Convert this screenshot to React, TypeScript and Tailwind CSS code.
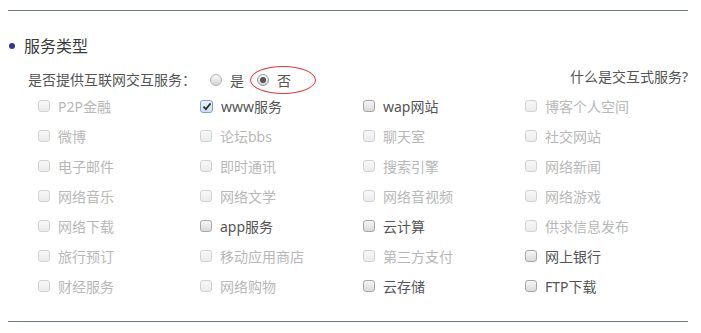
import React from "react";

type Item = { label: string; enabled?: boolean; checked?: boolean };

const items: Item[] = [
  { label: "P2P金融" },
  { label: "www服务", enabled: true, checked: true },
  { label: "wap网站", enabled: true },
  { label: "博客个人空间" },
  { label: "微博" },
  { label: "论坛bbs" },
  { label: "聊天室" },
  { label: "社交网站" },
  { label: "电子邮件" },
  { label: "即时通讯" },
  { label: "搜索引擎" },
  { label: "网络新闻" },
  { label: "网络音乐" },
  { label: "网络文学" },
  { label: "网络音视频" },
  { label: "网络游戏" },
  { label: "网络下载" },
  { label: "app服务", enabled: true },
  { label: "云计算", enabled: true },
  { label: "供求信息发布" },
  { label: "旅行预订" },
  { label: "移动应用商店" },
  { label: "第三方支付" },
  { label: "网上银行", enabled: true },
  { label: "财经服务" },
  { label: "网络购物" },
  { label: "云存储", enabled: true },
  { label: "FTP下载", enabled: true },
];

function Box({ enabled, checked }: { enabled?: boolean; checked?: boolean }) {
  if (checked) {
    return (
      <span className="w-[13px] h-[13px] rounded-[3px] border border-[#7aa3d8] bg-gradient-to-b from-[#eef4fc] to-[#cfdff3] flex items-center justify-center shrink-0">
        <svg width="10" height="9" viewBox="0 0 10 9">
          <path d="M1.4 4.6 L3.9 7.1 L8.6 1.4" fill="none" stroke="#333" strokeWidth="1.8" />
        </svg>
      </span>
    );
  }
  if (enabled) {
    return (
      <span className="w-[12px] h-[12px] rounded-[3px] border border-[#a8a8a8] bg-gradient-to-b from-[#f6f6f6] to-[#dadada] shrink-0" />
    );
  }
  return (
    <span className="w-[12px] h-[12px] rounded-[3px] border border-[#d2d2d2] bg-gradient-to-b from-[#f8f8f8] to-[#ebebeb] shrink-0" />
  );
}

export default function App() {
  return (
    <div
      className="w-[688px] pt-[10px] pl-2 bg-white"
      style={{ fontFamily: '"Noto Sans", "Noto Sans CJK SC", sans-serif' }}
    >
      <div className="border-t border-[#6f7888]" />

      {/* 标题 */}
      <div className="mt-[23px] h-[24px] flex items-center">
        <span className="ml-px w-[6px] h-[6px] rounded-full bg-[#2f3a8f]" />
        <span className="ml-[9px] text-[16px] leading-[24px] text-[#3a3a3a]">服务类型</span>
      </div>

      {/* 是否提供 */}
      <div className="mt-[11px] h-[22px] flex items-center pl-5">
        <span className="text-[14px] leading-[22px] text-[#555]">是否提供互联网交互服务：</span>
        <span className="ml-[14px] flex items-center">
          <span className="w-[12px] h-[12px] rounded-full border border-[#b0b0b0] bg-gradient-to-b from-[#f8f8f8] to-[#d4d4d4]" />
          <span className="ml-2 text-[14px] text-[#555]">是</span>
        </span>
        <span className="relative ml-[13px] flex items-center">
          <span className="w-[12px] h-[12px] rounded-full border border-[#9a9a9a] bg-gradient-to-b from-[#f8f8f8] to-[#d4d4d4] flex items-center justify-center">
            <span className="w-[6px] h-[6px] rounded-full bg-[#555]" />
          </span>
          <span className="ml-[8px] text-[14px] text-[#555]">否</span>
          <span className="absolute left-[-7px] top-1/2 -translate-y-1/2 w-[66px] h-[28px] rounded-[50%] border border-[#e0393e]" />
        </span>
        <span className="ml-auto pb-[8px] text-[14px] text-[#555]">什么是交互式服务?</span>
      </div>

      {/* 服务列表 */}
      <div className="pl-[30px] grid grid-cols-[162px_163px_162px_1fr]">
        {items.map((it) => (
          <div key={it.label} className="h-[30px] flex items-center">
            <Box enabled={it.enabled} checked={it.checked} />
            <span
              className={
                "ml-2 text-[14px] " + (it.enabled ? "text-[#555]" : "text-[#b8b8b8]")
              }
            >
              {it.label}
            </span>
          </div>
        ))}
      </div>

      <div className="mt-[20px] border-t border-[#6f7888]" />
    </div>
  );
}
